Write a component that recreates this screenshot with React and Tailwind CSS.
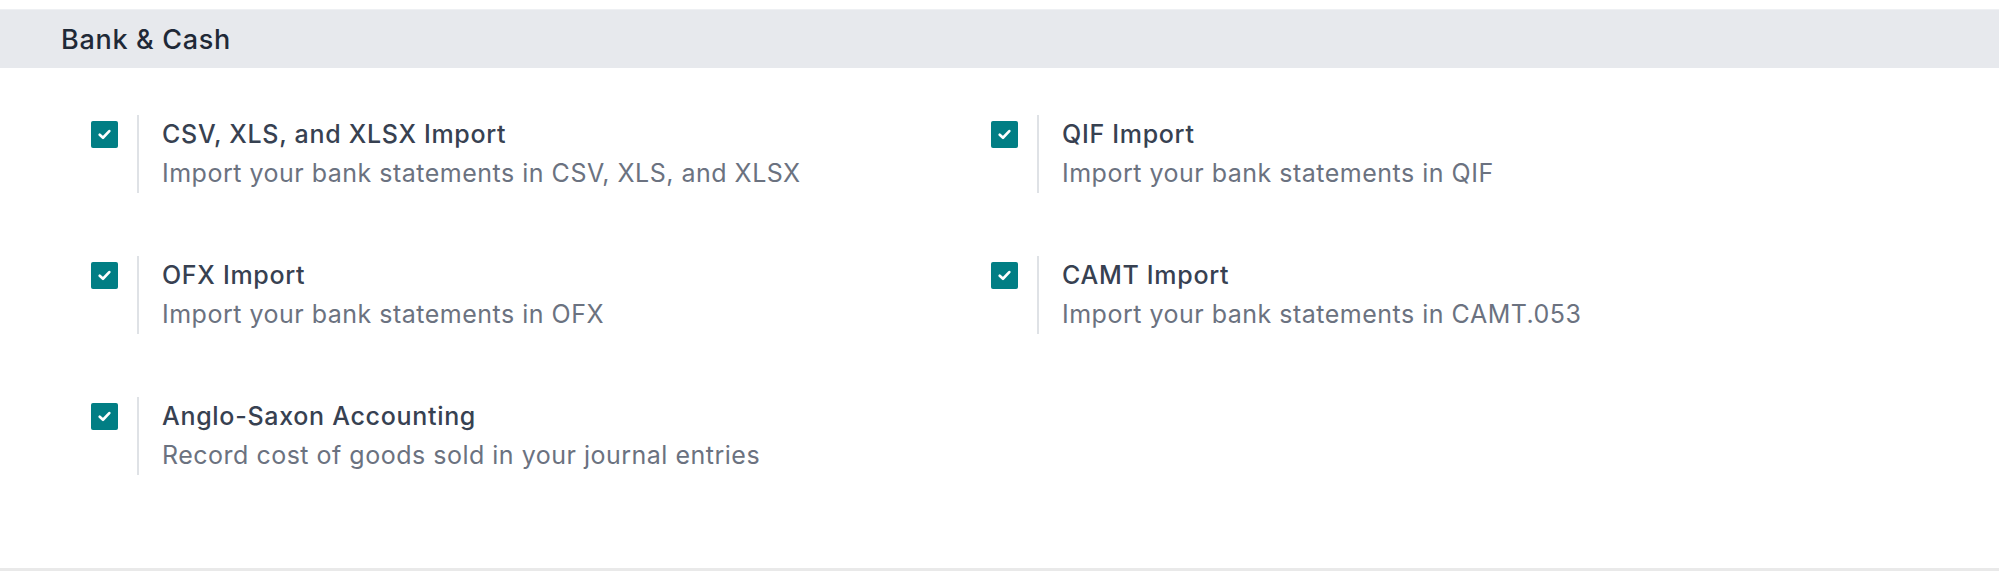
import React from "react";

function Check() {
  return (
    <div className="mt-[6px] flex h-[27px] w-[27px] shrink-0 items-center justify-center rounded-[2px] bg-[#017e84]">
      <svg width="13" height="11" viewBox="0 0 12 10" fill="none">
        <path d="M1.6 5.2 L4.6 8 L10.4 1.8" stroke="#ffffff" strokeWidth="2.4" strokeLinecap="round" strokeLinejoin="round" />
      </svg>
    </div>
  );
}

function Setting({ title, desc }) {
  return (
    <div className="flex h-[78px] items-start">
      <Check />
      <div className="ml-[19px] h-full border-l-2 border-[#dfe2e6] pl-[23px]">
        <div className="pt-[4px] text-[25px] leading-[30px] font-medium tracking-[0.7px] whitespace-nowrap text-[#374151]">{title}</div>
        <div className="mt-[9px] text-[25px] leading-[30px] tracking-[0.5px] whitespace-nowrap text-[#6b7280]">{desc}</div>
      </div>
    </div>
  );
}

export default function App() {
  const items = [
    ["CSV, XLS, and XLSX Import", "Import your bank statements in CSV, XLS, and XLSX"],
    ["QIF Import", "Import your bank statements in QIF"],
    ["OFX Import", "Import your bank statements in OFX"],
    ["CAMT Import", "Import your bank statements in CAMT.053"],
    ["Anglo-Saxon Accounting", "Record cost of goods sold in your journal entries"],
  ];
  return (
    <div className="h-[571px] w-[1999px] bg-white" style={{ fontFamily: "Inter, 'Noto Sans', sans-serif" }}>
      <div className="pt-[9px]">
        <div className="flex h-[59px] items-center border-t border-[#eef0f3] bg-[#e7e9ed] pl-[61px] pt-[2px] text-[27px] font-medium tracking-[0.7px] text-[#1f2937]">
          Bank &amp; Cash
        </div>
      </div>
      <div className="grid h-[503px] grid-cols-[900px_900px] content-start gap-y-[63px] border-b-[3px] border-[#e9e9e9] pl-[91px] pt-[47px]">
        {items.map(([t, d]) => (
          <Setting key={t} title={t} desc={d} />
        ))}
      </div>
    </div>
  );
}
